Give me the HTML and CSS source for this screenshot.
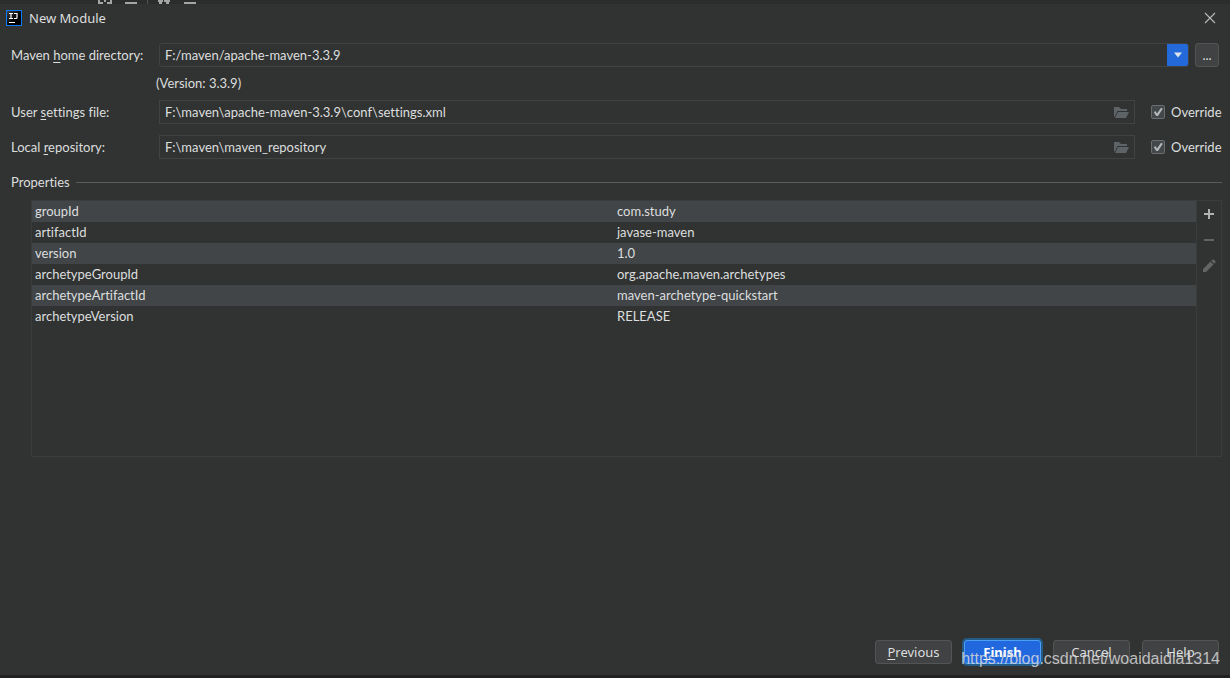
FILE: index.html
```html
<!DOCTYPE html>
<html lang="en">
<head>
<meta charset="utf-8">
<title>New Module</title>
<link rel="stylesheet" href="styles.css">
</head>
<body>
<div class="backdrop">
  <svg width="220" height="4" viewBox="0 0 220 4" fill="#a3a5a6" aria-hidden="true">
    <path d="M98 0h2v2h3v2h-5zM104 0h2v2h-2zM110 0h2v4h-5v-2h3zM125 2h12v2h-12zM158 0h5v2h-1v2h-3v-2h-1zM164 0h6v2h-1v2h-3v-2h-2zM184 2h12v2h-12z"/>
    <path d="M147 0h1v4h-1z" fill="#505253"/>
  </svg>
</div>
<main class="dialog">
  <header class="titlebar">
    <svg width="16" height="16" viewBox="0 0 16 16" aria-hidden="true">
      <defs><linearGradient id="logo" x1="0" y1="0" x2="1" y2="1"><stop offset="0" stop-color="#444"/><stop offset=".6" stop-color="#000"/></linearGradient></defs>
      <rect x=".5" y=".5" width="15" height="15" fill="url(#logo)" stroke="#087cfa"/>
      <path d="M3 3.500h4M5 3.500v5M3 8.500h4M8 3.500h3v4q0 1-1 1h-2M3 12.500h6" fill="none" stroke="#fff" stroke-width="1.200"/>
    </svg>
    <h1 class="title">New Module</h1>
    <button class="close" aria-label="Close"><svg width="12" height="12" viewBox="0 0 12 12"><path d="M1 1l10 10M11 1L1 11" stroke="#b9bbbc" stroke-width="1.100"/></svg></button>
  </header>

  <form class="content">
    <div class="row">
      <label class="label" for="home">Maven <u>h</u>ome directory:</label>
      <div class="combo">
        <select id="home" class="field"><option>F:/maven/apache-maven-3.3.9</option></select>
        <span class="arrow"><svg width="10" height="6" viewBox="0 0 10 6"><path d="M1 0.500h8L5 5.500z" fill="#dfe5ee"/></svg></span>
      </div>
      <button type="button" class="button browse" aria-label="Browse">...</button>
    </div>
    <p class="version">(Version: 3.3.9)</p>
    <div class="row">
      <label class="label" for="settings">User <u>s</u>ettings file:</label>
      <div class="filebox">
        <input id="settings" class="field" type="text" value="F:\maven\apache-maven-3.3.9\conf\settings.xml">
        <button type="button" class="folder" aria-label="Browse settings file"><svg width="16" height="12" viewBox="0 0 16 12" fill="#5d6366"><path d="M0 0h5l2 2h6v2H3.500L1 9.500H0z"/><path d="M4 5h11l-3 6H1z"/></svg></button>
      </div>
      <label class="check"><input type="checkbox" checked><span>Override</span></label>
    </div>
    <div class="row repository">
      <label class="label" for="repo">Local <u>r</u>epository:</label>
      <div class="filebox">
        <input id="repo" class="field" type="text" value="F:\maven\maven_repository">
        <button type="button" class="folder" aria-label="Browse repository"><svg width="16" height="12" viewBox="0 0 16 12" fill="#5d6366"><path d="M0 0h5l2 2h6v2H3.500L1 9.500H0z"/><path d="M4 5h11l-3 6H1z"/></svg></button>
      </div>
      <label class="check"><input type="checkbox" checked><span>Override</span></label>
    </div>

    <h2 class="section">Properties</h2>
    <div class="panel">
      <div class="tablebox">
        <table class="properties">
          <tbody>
            <tr><td>groupId</td><td>com.study</td></tr>
            <tr><td>artifactId</td><td>javase-maven</td></tr>
            <tr><td>version</td><td>1.0</td></tr>
            <tr><td>archetypeGroupId</td><td>org.apache.maven.archetypes</td></tr>
            <tr><td>archetypeArtifactId</td><td>maven-archetype-quickstart</td></tr>
            <tr><td>archetypeVersion</td><td>RELEASE</td></tr>
          </tbody>
        </table>
      </div>
      <div class="tools">
        <button type="button" class="tool" aria-label="Add"><svg width="14" height="14" viewBox="0 0 14 14"><path d="M6 2h2v4h4v2H8v4H6V8H2V6h4z" fill="#afb1b3"/></svg></button>
        <button type="button" class="tool" aria-label="Remove"><svg width="14" height="14" viewBox="0 0 14 14"><path d="M2 6h10v2H2z" fill="#626465"/></svg></button>
        <button type="button" class="tool" aria-label="Edit"><svg width="14" height="14" viewBox="0 0 14 14" fill="#626465"><path d="M1 10L8.500 2.500l3 3L4 13H1zM9.300 1.700l1-1q.8-.6 1.600 0l1.400 1.400q.6.800 0 1.600l-1 1z"/></svg></button>
      </div>
    </div>
  </form>

  <footer class="actions">
    <button class="button"><u>P</u>revious</button>
    <button class="button primary"><u>F</u>inish</button>
    <button class="button">Cancel</button>
    <button class="button">Help</button>
    <span class="watermark">https://blog.csdn.net/woaidaidia1314</span>
  </footer>
</main>
</body>
</html>
```
FILE: styles.css
```css
* {
  box-sizing: border-box;
}

body {
  margin: 0;
  min-height: 100vh;
  display: flex;
  flex-direction: column;
  background: #313332;
  color: #dcdedf;
  font: 13px/20px "Noto Sans", sans-serif;
  font-variant-ligatures: none;
}

button,
input,
select {
  font: inherit;
  color: inherit;
}

button {
  padding: 0;
  border: 0;
  background: none;
}

svg {
  display: block;
}

u {
  text-underline-offset: 2px;
}

.backdrop {
  height: 4px;
  background: #2b2c2c;
}

.dialog {
  flex: 1;
  display: flex;
  flex-direction: column;
  border-bottom: 3px solid #222122;
}

.titlebar {
  display: flex;
  align-items: center;
  height: 28px;
  padding: 0 14px 0 6px;
  gap: 7px;
}

.title {
  flex: 1;
  margin: 0;
  font-size: 13px;
  font-weight: 400;
}

.content {
  flex: 1;
  padding: 11px 8px 0 11px;
  font-family: Lato, sans-serif;
}

.row {
  display: flex;
  align-items: center;
  height: 24px;
}

.label {
  flex: 0 0 148px;
}

.combo,
.filebox {
  position: relative;
  flex: 1;
  display: flex;
  height: 24px;
}

.field {
  flex: 1;
  min-width: 0;
  height: 24px;
  margin: 0;
  padding: 0 30px 1px 5px;
  border: 1px solid #414343;
  border-radius: 0;
  background: transparent;
  outline: 0;
  appearance: none;
}

.combo .field {
  border-radius: 3px;
}

.arrow {
  position: absolute;
  top: 1px;
  right: 1px;
  bottom: 1px;
  width: 21px;
  display: grid;
  place-items: center;
  background: #2369d9;
  border-radius: 0 2px 2px 0;
  pointer-events: none;
}

.folder {
  position: absolute;
  top: 7px;
  right: 5px;
}

.button {
  width: 77px;
  height: 24px;
  border: 1px solid #525455;
  border-radius: 3px;
  background: #414243;
}

.browse {
  width: 24px;
  margin: 0 3px 0 6px;
}

.version {
  margin: 6px 0 7px 145px;
}

.check {
  flex: 0 0 71px;
  display: flex;
  align-items: center;
  gap: 6px;
  margin-left: 16px;
}

.check input {
  width: 14px;
  height: 14px;
  margin: 0;
  border: 1px solid #6b6d6e;
  border-radius: 2px;
  background: #43494a;
  appearance: none;
  display: flex;
}

.check input:checked::before {
  content: "";
  width: 12px;
  height: 12px;
  background: #b4b6b7;
  clip-path: polygon(15% 52%, 28% 42%, 42% 62%, 75% 14%, 90% 22%, 50% 84%, 36% 84%);
}

.repository {
  margin-top: 11px;
}

.section {
  display: flex;
  align-items: center;
  gap: 6px;
  margin: 13px 0 8px;
  font-size: 13px;
  font-weight: 400;
}

.section::after {
  content: "";
  flex: 1;
  height: 1px;
  background: #5a5c5c;
}

.panel {
  display: flex;
  min-height: 257px;
  margin-left: 20px;
  border: 1px solid #3b3d3d;
}

.tablebox {
  flex: 1;
}

.properties {
  width: 100%;
  table-layout: fixed;
  border-collapse: collapse;
}

.properties td {
  height: 21px;
  padding: 0 3px 1px;
  vertical-align: top;
}

.properties tr:nth-child(odd) {
  background: #414547;
}

.tools {
  display: flex;
  flex-direction: column;
  align-items: center;
  gap: 12px;
  width: 25px;
  padding-top: 6px;
  border-left: 1px solid #3b3d3d;
}

.actions {
  position: relative;
  display: flex;
  justify-content: flex-end;
  gap: 12px;
  padding: 0 11px 11px;
}

.primary {
  border-color: #4ba0f5;
  background: #2168df;
  box-shadow: 0 0 0 2px #245b86;
  color: #fff;
  font-weight: 700;
}

.watermark {
  position: absolute;
  right: 10px;
  bottom: 6px;
  color: rgba(215, 215, 215, 0.85);
  font: 16px/20px "Liberation Sans", sans-serif;
  pointer-events: none;
}
```
